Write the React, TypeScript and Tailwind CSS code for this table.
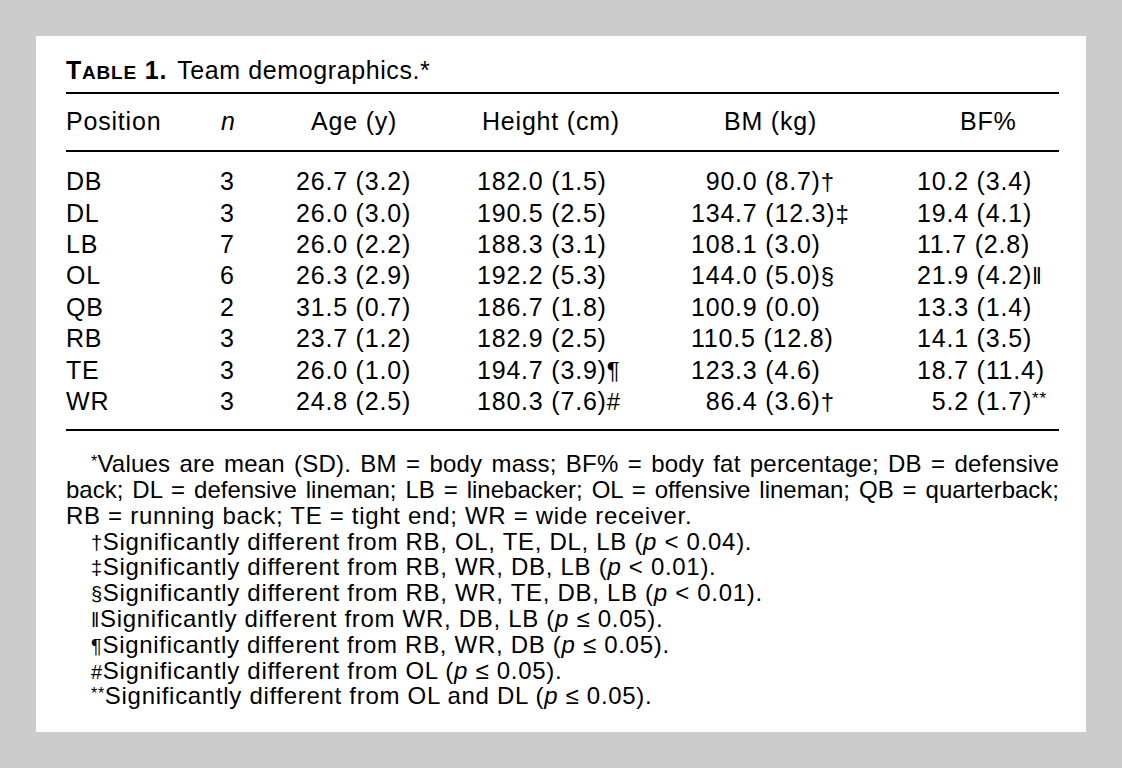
import React from "react";

type Cell = { pad?: boolean; v: string; mark?: string; sup?: boolean };

const rows: { pos: string; n: string; cells: Cell[] }[] = [
  { pos: "DB", n: "3", cells: [{ v: "26.7 (3.2)" }, { v: "182.0 (1.5)" }, { pad: true, v: "90.0 (8.7)", mark: "†" }, { v: "10.2 (3.4)" }] },
  { pos: "DL", n: "3", cells: [{ v: "26.0 (3.0)" }, { v: "190.5 (2.5)" }, { v: "134.7 (12.3)", mark: "‡" }, { v: "19.4 (4.1)" }] },
  { pos: "LB", n: "7", cells: [{ v: "26.0 (2.2)" }, { v: "188.3 (3.1)" }, { v: "108.1 (3.0)" }, { v: "11.7 (2.8)" }] },
  { pos: "OL", n: "6", cells: [{ v: "26.3 (2.9)" }, { v: "192.2 (5.3)" }, { v: "144.0 (5.0)", mark: "§" }, { v: "21.9 (4.2)", mark: "‖" }] },
  { pos: "QB", n: "2", cells: [{ v: "31.5 (0.7)" }, { v: "186.7 (1.8)" }, { v: "100.9 (0.0)" }, { v: "13.3 (1.4)" }] },
  { pos: "RB", n: "3", cells: [{ v: "23.7 (1.2)" }, { v: "182.9 (2.5)" }, { v: "110.5 (12.8)" }, { v: "14.1 (3.5)" }] },
  { pos: "TE", n: "3", cells: [{ v: "26.0 (1.0)" }, { v: "194.7 (3.9)", mark: "¶" }, { v: "123.3 (4.6)" }, { v: "18.7 (11.4)" }] },
  { pos: "WR", n: "3", cells: [{ v: "24.8 (2.5)" }, { v: "180.3 (7.6)", mark: "#" }, { pad: true, v: "86.4 (3.6)", mark: "†" }, { pad: true, v: "5.2 (1.7)", mark: "**", sup: true }] },
];

const notes: { mark: string; text: string; p: string; small?: boolean }[] = [
  { mark: "†", text: "Significantly different from RB, OL, TE, DL, LB (", p: " < 0.04)." },
  { mark: "‡", text: "Significantly different from RB, WR, DB, LB (", p: " < 0.01)." },
  { mark: "§", text: "Significantly different from RB, WR, TE, DB, LB (", p: " < 0.01)." },
  { mark: "‖", text: "Significantly different from WR, DB, LB (", p: " ≤ 0.05)." },
  { mark: "¶", text: "Significantly different from RB, WR, DB (", p: " ≤ 0.05)." },
  { mark: "#", text: "Significantly different from OL (", p: " ≤ 0.05)." },
  { mark: "**", text: "Significantly different from OL and DL (", p: " ≤ 0.05).", small: true },
];

const cols = "grid grid-cols-[152px_72px_180px_214px_226px_149px]";
const valuePad = ["pl-[2px]", "pl-[6px]", "pl-[7px]", "pl-[7px]", "pl-[7px]"];

export default function App() {
  return (
    <div className="min-h-screen bg-[#cccccc] p-[36px] font-['Liberation_Sans',Arial,sans-serif] text-black">
      <div className="h-[696px] bg-white px-[30px] pr-[27px] flex flex-col">
        {/* Title */}
        <div className="h-[56px] flex items-end pb-[9px] text-[25px] leading-none">
          <span className="font-bold tracking-[0.8px]">
            T<span className="text-[19px]">ABLE</span> 1.
          </span>
          <span className="ml-[10px] tracking-[0.6px]">Team demographics.*</span>
        </div>

        <div className="h-[2px] bg-black" />

        {/* Header */}
        <div className={`${cols} h-[56px] items-center text-[25px] tracking-[0.8px]`}>
          <div>Position</div>
          <div className="pl-[3px] italic">n</div>
          <div className="pl-[21px]">Age (y)</div>
          <div className="pl-[12px]">Height (cm)</div>
          <div className="pl-[40px]">BM (kg)</div>
          <div className="pl-[50px]">BF%</div>
        </div>

        <div className="h-[2px] bg-black" />

        {/* Body */}
        <div className="pt-[14px] pb-[12px] text-[25px] tracking-[0.8px]">
          {rows.map((r) => (
            <div key={r.pos} className={`${cols} h-[31.4px] items-center leading-none`}>
              <div>{r.pos}</div>
              <div className={valuePad[0]}>{r.n}</div>
              {r.cells.map((c, i) => (
                <div key={i} className={`${valuePad[i + 1]} whitespace-nowrap`}>
                  {c.pad && <span className="invisible">1</span>}
                  {c.v}
                  {c.mark &&
                    (c.sup ? (
                      <span className="text-[17px] align-[6px] leading-none">{c.mark}</span>
                    ) : (
                      <span className="text-[24px] leading-none tracking-normal">{c.mark}</span>
                    ))}
                </div>
              ))}
            </div>
          ))}
        </div>

        <div className="h-[2px] bg-black" />

        {/* Footnotes */}
        <div className="pt-[20px] text-[24px] leading-[25.8px] tracking-[0.7px]">
          <p className="text-justify [text-align-last:justify] indent-[25px] whitespace-nowrap tracking-[0.2px]">
            <span className="text-[16px] align-[5px] leading-none">*</span>Values are mean (SD). BM = body mass; BF% = body fat percentage; DB = defensive
          </p>
          <p className="text-justify [text-align-last:justify] whitespace-nowrap tracking-[0px]">
            back; DL = defensive lineman; LB = linebacker; OL = offensive lineman; QB = quarterback;
          </p>
          <p>RB = running back; TE = tight end; WR = wide receiver.</p>
          {notes.map((n) => (
            <p key={n.mark} className="pl-[25px]">
              <span className={n.small ? "text-[16px] align-[5px] leading-none" : "text-[20px] leading-none"}>{n.mark}</span>
              {n.text}
              <span className="italic">p</span>
              {n.p}
            </p>
          ))}
        </div>
      </div>
    </div>
  );
}
